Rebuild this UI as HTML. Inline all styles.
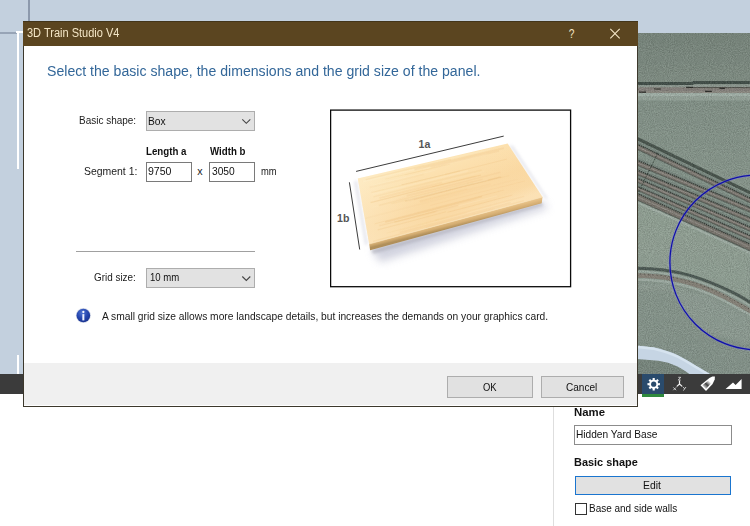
<!DOCTYPE html>
<html lang="en">
<head>
<meta charset="utf-8">
<title>3D Train Studio V4</title>
<style>
html,body{margin:0;padding:0}
body{width:750px;height:526px;position:relative;overflow:hidden;background:#fff;font-family:"Liberation Sans",sans-serif}
.abs{position:absolute}
.t{position:absolute;white-space:pre;line-height:1em;transform-origin:0 0;font-family:"Liberation Sans",sans-serif}
#sky{left:0;top:0;width:750px;height:374px;background:#c3d0de}
#terrain{left:637px;top:33px;width:113px;height:341px}
#toolbar{left:0;top:374px;width:750px;height:20px;background:#3b3b3b}
#tabsel{left:642px;top:374px;width:22px;height:20px;background:#2a4b6c}
#tabgreen{left:642px;top:394px;width:22px;height:3px;background:#2f8a3c}
#panelline{left:553px;top:394px;width:1px;height:132px;background:#dedede}
/* dialog */
#dlg{left:23px;top:21px;width:615px;height:385.7px;background:#fff;box-sizing:border-box;border:1px solid #3c382c;border-top:none}
#titlebar{left:23px;top:21px;width:615px;height:24.5px;background:#5b4520;box-sizing:border-box;border-top:1px solid #43351a}
#footer{left:24px;top:362.7px;width:613px;height:42.1px;background:#f0f0f0}
.combo{background:#e2e2e2;border:1px solid #adadad;box-sizing:border-box}
.inp{background:#fff;border:1px solid #7a7a7a;box-sizing:border-box}
.btn{background:#e1e1e1;border:1px solid #adadad;box-sizing:border-box}
#t_title{left:26.74px;top:26.94px;font-size:12px;font-weight:400;color:#f4e6c6;transform:scaleX(0.9170)}
#t_head{left:46.81px;top:63.46px;font-size:15.4px;font-weight:400;color:#336799;transform:scaleX(0.9161)}
#t_bs{left:78.80px;top:115.44px;font-size:10.7px;font-weight:400;color:#1a1a1a;transform:scaleX(0.9328)}
#t_box{left:148.48px;top:116.44px;font-size:10.7px;font-weight:400;color:#111;transform:scaleX(0.9600)}
#t_la{left:146.01px;top:145.61px;font-size:10.5px;font-weight:700;color:#111;transform:scaleX(0.9249)}
#t_wb{left:209.60px;top:145.61px;font-size:10.5px;font-weight:700;color:#111;transform:scaleX(0.9237)}
#t_seg{left:83.51px;top:166.44px;font-size:10.7px;font-weight:400;color:#1a1a1a;transform:scaleX(0.9765)}
#t_9750{left:147.51px;top:166.44px;font-size:10.7px;font-weight:400;color:#111;transform:scaleX(0.9870)}
#t_x{left:197.25px;top:166.44px;font-size:10.7px;font-weight:400;color:#1a1a1a;letter-spacing:0.000px}
#t_3050{left:211.52px;top:166.44px;font-size:10.7px;font-weight:400;color:#111;transform:scaleX(0.9565)}
#t_mm{left:260.61px;top:166.87px;font-size:10.2px;font-weight:400;color:#1a1a1a;transform:scaleX(0.9206)}
#t_gs{left:94.34px;top:272.24px;font-size:10.7px;font-weight:400;color:#1a1a1a;transform:scaleX(0.9257)}
#t_10{left:149.79px;top:273.27px;font-size:10.2px;font-weight:400;color:#111;transform:scaleX(0.9412)}
#t_info{left:102.00px;top:310.94px;font-size:10.7px;font-weight:400;color:#1a1a1a;transform:scaleX(0.9579)}
#t_ok{left:483.06px;top:381.84px;font-size:10.7px;font-weight:400;color:#111;transform:scaleX(0.8814)}
#t_cancel{left:566.23px;top:381.84px;font-size:10.7px;font-weight:400;color:#111;transform:scaleX(0.9406)}
#t_name{left:574.06px;top:407.17px;font-size:11.5px;font-weight:700;color:#111;transform:scaleX(0.9884)}
#t_hyb{left:576.29px;top:428.84px;font-size:10.7px;font-weight:400;color:#111;transform:scaleX(0.9491)}
#t_bs2{left:574.09px;top:456.97px;font-size:11.5px;font-weight:700;color:#111;transform:scaleX(0.9500)}
#t_edit{left:643.27px;top:479.94px;font-size:10.7px;font-weight:400;color:#111;transform:scaleX(0.9690)}
#t_base{left:589.00px;top:502.94px;font-size:10.7px;font-weight:400;color:#111;transform:scaleX(0.9337)}
</style>
</head>
<body>
<div class="abs" id="sky"></div>
<!-- viewport guide lines on the left -->
<div class="abs" style="left:28px;top:0;width:1.5px;height:21px;background:#8c99ac"></div>
<div class="abs" style="left:0;top:32px;width:17px;height:1.5px;background:#97a4b6"></div>
<div class="abs" style="left:16px;top:31px;width:7px;height:1.5px;background:#fff"></div>
<div class="abs" style="left:16.5px;top:31px;width:2px;height:138px;background:#fff"></div>
<div class="abs" style="left:16.5px;top:355px;width:2px;height:19px;background:#fff"></div>

<!-- 3D terrain -->
<svg class="abs" id="terrain" viewBox="637 33 113 341">
<defs>
<linearGradient id="tg" gradientUnits="userSpaceOnUse" x1="0" y1="33" x2="0" y2="374">
<stop offset="0" stop-color="#77857b"/><stop offset="0.12" stop-color="#7e8c82"/><stop offset="0.2" stop-color="#839288"/><stop offset="0.55" stop-color="#8a998e"/><stop offset="1" stop-color="#84938a"/>
</linearGradient>
<filter id="tn" x="0" y="0" width="100%" height="100%">
<feTurbulence type="fractalNoise" baseFrequency="0.95" numOctaves="2" seed="4" result="n"/>
<feColorMatrix in="n" type="matrix" values="0 0 0 0 0  0 0 0 0 0  0 0 0 0 0  1.4 0 0 0 -0.45"/>
</filter>
<filter id="tn2" x="0" y="0" width="100%" height="100%">
<feTurbulence type="fractalNoise" baseFrequency="0.95" numOctaves="2" seed="11" result="n"/>
<feColorMatrix in="n" type="matrix" values="0 0 0 0 1  0 0 0 0 1  0 0 0 0 1  1.4 0 0 0 -0.5"/>
</filter>
<filter id="b1"><feGaussianBlur stdDeviation="0.7"/></filter>
<filter id="b2"><feGaussianBlur stdDeviation="1.6"/></filter>
<filter id="b05"><feGaussianBlur stdDeviation="0.4"/></filter>
</defs>
<rect x="637" y="33" width="113" height="341" fill="url(#tg)"/>
<polygon points="637,201 750,252 750,300 712,282 666,270 637,268" fill="#93a396" opacity="0.8" filter="url(#b2)"/>
<polygon points="637,282 666,284 712,298 750,318 750,345 700,330 670,290 637,290" fill="#95a39a" opacity="0.5" filter="url(#b2)"/>
<g filter="url(#b05)">
<rect x="637" y="84.5" width="113" height="3" fill="#8d9890"/>
<path d="M637 83.6 L692 83.6 L694 82.4 L750 82.4" stroke="#414d46" stroke-width="3" fill="none"/>
<rect x="637" y="87.3" width="113" height="5.8" fill="#85817b"/>
<rect x="637" y="91" width="113" height="2.2" fill="#8d8c85" opacity="0.8"/>
<path d="M686 87.6 L750 87.6" stroke="#4a4843" stroke-width="0.9" fill="none"/>
<path d="M654 89 L661 89 M639 92.2 L646 92.2 M686 87.4 L693 87.4 M705 91.3 L712 91.3 M719.5 88.3 L725 88.3" stroke="#2b2b27" stroke-width="1.2" fill="none"/>
<rect x="637" y="93.1" width="113" height="3.4" fill="#a3b2a9"/>
<rect x="637" y="96.5" width="113" height="4" fill="#98a79e" opacity="0.8"/>
</g>
<g>
<polygon points="637,138.7 750,192.6 750,252 637,200.5" fill="#84948a"/>
<polygon points="637,144.4 750,198.5 750,202.5 637,149.0" fill="#77736b"/>
<path d="M637 146.5 L750 200.3" stroke="#959089" stroke-width="1.2" stroke-opacity="0.8"/>
<path d="M637 149.2 L750 202.7" stroke="#4a4f49" stroke-width="1.1" stroke-opacity="0.7"/>
<path d="M637 143.9 L750 198.0" stroke="#2a2e2a" stroke-width="1.5" stroke-dasharray="1.5 0.6" stroke-opacity="0.85"/>
<path d="M637 142.2 L750 196.3" stroke="#6f7d75" stroke-width="2" stroke-opacity="0.45"/>
<polygon points="637,160.5 750,208.0 750,212.0 637,165.0" fill="#77736b"/>
<path d="M637 162.5 L750 209.8" stroke="#959089" stroke-width="1.2" stroke-opacity="0.8"/>
<path d="M637 165.2 L750 212.2" stroke="#4a4f49" stroke-width="1.1" stroke-opacity="0.7"/>
<path d="M637 160.0 L750 207.5" stroke="#2a2e2a" stroke-width="1.5" stroke-dasharray="1.5 0.6" stroke-opacity="0.85"/>
<path d="M637 158.3 L750 205.8" stroke="#6f7d75" stroke-width="2" stroke-opacity="0.45"/>
<polygon points="637,170.4 750,218.0 750,222.0 637,174.4" fill="#77736b"/>
<path d="M637 172.2 L750 219.8" stroke="#959089" stroke-width="1.2" stroke-opacity="0.8"/>
<path d="M637 174.6 L750 222.2" stroke="#4a4f49" stroke-width="1.1" stroke-opacity="0.7"/>
<path d="M637 169.9 L750 217.5" stroke="#2a2e2a" stroke-width="1.5" stroke-dasharray="1.5 0.6" stroke-opacity="0.85"/>
<path d="M637 168.2 L750 215.8" stroke="#6f7d75" stroke-width="2" stroke-opacity="0.45"/>
<polygon points="637,178.5 750,227.5 750,231.0 637,182.0" fill="#77736b"/>
<path d="M637 180.1 L750 229.1" stroke="#959089" stroke-width="1.2" stroke-opacity="0.8"/>
<path d="M637 182.2 L750 231.2" stroke="#4a4f49" stroke-width="1.1" stroke-opacity="0.7"/>
<path d="M637 178.0 L750 227.0" stroke="#2a2e2a" stroke-width="1.5" stroke-dasharray="1.5 0.6" stroke-opacity="0.85"/>
<path d="M637 176.3 L750 225.3" stroke="#6f7d75" stroke-width="2" stroke-opacity="0.45"/>
<polygon points="637,186.5 750,236.0 750,239.5 637,190.0" fill="#77736b"/>
<path d="M637 188.1 L750 237.6" stroke="#959089" stroke-width="1.2" stroke-opacity="0.8"/>
<path d="M637 190.2 L750 239.7" stroke="#4a4f49" stroke-width="1.1" stroke-opacity="0.7"/>
<path d="M637 186.0 L750 235.5" stroke="#2a2e2a" stroke-width="1.5" stroke-dasharray="1.5 0.6" stroke-opacity="0.85"/>
<path d="M637 184.3 L750 233.8" stroke="#6f7d75" stroke-width="2" stroke-opacity="0.45"/>
<polygon points="637,193.8 750,244.5 750,250.5 637,199.8" fill="#77736b"/>
<path d="M637 196.5 L750 247.2" stroke="#959089" stroke-width="1.2" stroke-opacity="0.8"/>
<path d="M637 200.0 L750 250.7" stroke="#4a4f49" stroke-width="1.1" stroke-opacity="0.7"/>
<path d="M637 193.3 L750 244.0" stroke="#2a2e2a" stroke-width="1.5" stroke-dasharray="1.5 0.6" stroke-opacity="0.85"/>
<path d="M637 191.6 L750 242.3" stroke="#6f7d75" stroke-width="2" stroke-opacity="0.45"/>
<path d="M636 201.8 L751 253.4" stroke="#a6b4ab" stroke-width="2.2" stroke-opacity="0.8" filter="url(#b1)"/>
<path d="M636 138 L751 193.1" stroke="#47534c" stroke-width="3.2" filter="url(#b1)"/>
<path d="M657.8 152.8 L637.9 193.6" stroke="#2f3b33" stroke-width="0.8" stroke-dasharray="2 1.2"/>
</g>
<path d="M636 268.2 C655 268 672 270.5 689.2 275.1 C706 280 722 287 734.8 293.3 C742 297 746 300 751 303" stroke="#4c5952" stroke-width="3" fill="none" filter="url(#b1)"/>
<path d="M636 271.6 C655 271.6 672 274 689.2 278.6 C706 283.5 722 290.5 734.8 297 C742 300.5 746 303.5 751 306.5" stroke="#9baaa1" stroke-width="2" fill="none" filter="url(#b05)"/>
<path d="M636 275.5 C655 275.4 672 278 689.2 282.7 C706 287.6 722 295 734.8 302.4 C742 306.5 746 308.5 751 311.5" stroke="#868278" stroke-width="4.6" fill="none" filter="url(#b05)"/>
<path d="M636 274 C655 273.9 672 276.4 689.2 281.2 C706 286 722 293.4 734.8 300.6 C742 304.6 746 307 751 310" stroke="#3e3e38" stroke-width="0.9" stroke-dasharray="0.9 3.2" fill="none"/>
<path d="M636 279.6 C655 279.5 672 282 689.2 286.8 C706 291.6 722 299 734.8 306.4 C742 310.5 746 312.5 751 315.5" stroke="#a0aea5" stroke-width="2.4" fill="none" filter="url(#b1)"/>
<path d="M637 358 L658.5 360 C665 361 671 363 677.5 366 C683 369 686 371 690 374.5 L637 374.5 Z" fill="#76847a" opacity="0.8"/>
<rect x="637" y="33" width="113" height="341" filter="url(#tn)" opacity="0.22"/>
<rect x="637" y="33" width="113" height="341" filter="url(#tn2)" opacity="0.16"/>
<path d="M637 345.6 L654.7 347.5 C663 349.5 671 352 677.5 355 C684 358.5 688 360.8 692.8 363.7 L711 374.5 L690 374.5 C686 371.5 683 369.5 677.5 366.5 C671 363.5 665 361.8 658.5 360.8 L637 359 Z" fill="#c6d5e4"/>
<path d="M637 345.6 L654.7 347.5 C663 349.5 671 352 677.5 355 C684 358.5 688 360.8 692.8 363.7 L711 374.5" stroke="#d6e3ef" stroke-width="2.4" fill="none" transform="translate(-0.6,1.3)"/>
<circle cx="757.2" cy="262.5" r="87.3" stroke="#7878e0" stroke-opacity="0.45" stroke-width="2.4" fill="none"/>
<circle cx="757.2" cy="262.5" r="87.3" stroke="#1010a6" stroke-width="1.25" fill="none"/>
</svg>

<div class="abs" id="toolbar"></div>
<div class="abs" id="tabsel"></div>
<div class="abs" id="tabgreen"></div>
<svg class="abs" style="left:637px;top:374px;width:113px;height:20px" viewBox="637 374 113 20">
<path d="M659.91 383.12 L659.91 385.28 L658.17 385.27 L657.62 386.60 L658.85 387.82 L657.32 389.35 L656.10 388.12 L654.77 388.67 L654.78 390.41 L652.62 390.41 L652.63 388.67 L651.30 388.12 L650.08 389.35 L648.55 387.82 L649.78 386.60 L649.23 385.27 L647.49 385.28 L647.49 383.12 L649.23 383.13 L649.78 381.80 L648.55 380.58 L650.08 379.05 L651.30 380.28 L652.63 379.73 L652.62 377.99 L654.78 377.99 L654.77 379.73 L656.10 380.28 L657.32 379.05 L658.85 380.58 L657.62 381.80 L658.17 383.13Z" fill="#fff"/>
<circle cx="653.7" cy="384.2" r="2.6" fill="#2a4b6c"/>
<g stroke="#f4f4f4" stroke-width="1.2" fill="none" stroke-linecap="round"><path d="M679.5 384 L679.5 381 M679.5 384 L677.1 386.1 M679.5 384 L681.9 386.1"/></g>
<g stroke="#ececec" stroke-width="0.8" fill="none"><path d="M678.3 377.3 h2.4 l-2.4 2.8 h2.4 M673.3 387.4 l2.8 2.8 m0 -2.8 l-2.8 2.8 M683.2 387 l1.4 1.8 l1.4 -1.8 m-1.4 1.8 l-1.2 1.8"/></g>
<defs><linearGradient id="pt" gradientUnits="userSpaceOnUse" x1="703" y1="388" x2="710" y2="380.5"><stop offset="0" stop-color="#f4f4f4"/><stop offset="0.18" stop-color="#bbb"/><stop offset="0.5" stop-color="#3e3e3e"/><stop offset="0.8" stop-color="#d0d0d0"/><stop offset="1" stop-color="#fff"/></linearGradient></defs>
<path d="M700.5 385.2 L709.4 377.9 L712.4 376.4 L714.9 376.6 L714.7 379.4 L712.6 384 L706 391 Z" fill="#fff"/>
<path d="M702.4 385.3 L708.4 380.4 L711 383.2 L706 388.9 Z" fill="url(#pt)"/>
<path d="M725.6 389 L733 382.6 L735.6 385 L741.6 379 L741.6 389 Z" fill="#fff"/>
</svg>
<div class="abs" id="panelline"></div>

<!-- right property panel -->
<div class="abs inp" style="left:574px;top:425px;width:158px;height:19.5px;border-color:#8c8c8c"></div>
<div class="abs" style="left:575px;top:475.5px;width:156px;height:19.5px;background:#e1e1e1;box-sizing:border-box;border:1.6px solid #1a75cf"></div>
<div class="abs" style="left:575px;top:502.5px;width:12px;height:12px;background:#fff;box-sizing:border-box;border:1px solid #333"></div>

<!-- dialog -->
<div class="abs" id="dlg"></div>
<div class="abs" id="titlebar"></div>
<div class="abs" id="footer"></div>
<svg class="abs" style="left:560px;top:21px;width:78px;height:25px" viewBox="560 21 78 25">
<path d="M610.3 28.8 L619.7 38.3 M619.7 28.8 L610.3 38.3" stroke="#f4e6c6" stroke-width="1.1" fill="none"/>
<text x="0" y="38.4" transform="translate(571.6 0) scale(0.8 1)" font-family="Liberation Sans, sans-serif" font-size="12.8" fill="#f4e6c6" text-anchor="middle">?</text>
</svg>

<div class="abs combo" style="left:146px;top:111px;width:109px;height:19.5px"></div>
<div class="abs combo" style="left:146px;top:268px;width:109px;height:19.5px"></div>
<svg class="abs" style="left:240px;top:111px;width:14px;height:177px" viewBox="240 111 14 177">
<path d="M242.3 119.3 L246.3 123.3 L250.3 119.3" stroke="#444" stroke-width="1.1" fill="none"/>
<path d="M242.3 276.5 L246.3 280.5 L250.3 276.5" stroke="#444" stroke-width="1.1" fill="none"/>
</svg>
<div class="abs inp" style="left:145.5px;top:162px;width:46px;height:20px"></div>
<div class="abs inp" style="left:209px;top:162px;width:46px;height:20px"></div>
<div class="abs" style="left:76px;top:251px;width:179px;height:1px;background:#a0a0a0"></div>

<!-- preview panel -->
<svg class="abs" style="left:330px;top:109px;width:242px;height:179px" viewBox="330 109 242 179">
<defs>
<linearGradient id="wg" gradientUnits="userSpaceOnUse" x1="430" y1="158" x2="455" y2="224">
<stop offset="0" stop-color="#fde6b8"/><stop offset="0.25" stop-color="#fce0ae"/><stop offset="0.6" stop-color="#fad9a3"/><stop offset="0.85" stop-color="#fadaa6"/><stop offset="1" stop-color="#fce2b6"/>
</linearGradient>
<linearGradient id="wl" gradientUnits="userSpaceOnUse" x1="360" y1="210" x2="540" y2="170">
<stop offset="0" stop-color="#fff3d8" stop-opacity="0.35"/><stop offset="0.35" stop-color="#fff3d8" stop-opacity="0"/><stop offset="1" stop-color="#f0c07a" stop-opacity="0.03"/>
</linearGradient>
<linearGradient id="wf" gradientUnits="userSpaceOnUse" x1="455" y1="220" x2="456.6" y2="226.5">
<stop offset="0" stop-color="#e6c086"/><stop offset="0.55" stop-color="#d4ad72"/><stop offset="1" stop-color="#b08f5a"/>
</linearGradient>
<filter id="wsh" x="-20%" y="-50%" width="140%" height="220%"><feGaussianBlur stdDeviation="4"/></filter>
<filter id="wsh2" x="-20%" y="-50%" width="140%" height="220%"><feGaussianBlur stdDeviation="1.5"/></filter>
<filter id="gb"><feGaussianBlur stdDeviation="0.7"/></filter>
<clipPath id="wclip"><polygon points="357.8,178.6 507.7,143.5 542.5,197.1 369.2,244.0"/></clipPath>
</defs>
<rect x="330.6" y="110.1" width="240" height="176.6" fill="#fff" stroke="#0a0a0a" stroke-width="1.3"/>
<polygon points="372,249 543,202 548,208 380,262" fill="#c4c6d6" opacity="0.8" filter="url(#wsh)"/>
<polygon points="371,249.5 542,202.5 543,205.5 373,254" fill="#9a9aa8" opacity="0.5" filter="url(#wsh2)"/>
<polygon points="509,145 545,198 548,199 513,146" fill="#c9cad8" opacity="0.5" filter="url(#wsh2)"/>
<polygon points="357,180 368,244 365,245 354,182" fill="#c9cad8" opacity="0.45" filter="url(#wsh2)"/>
<polygon points="357.8,178.6 507.7,143.5 542.5,197.1 369.2,244.0" fill="url(#wg)"/>
<polygon points="357.8,178.6 507.7,143.5 542.5,197.1 369.2,244.0" fill="url(#wl)"/>
<g clip-path="url(#wclip)" filter="url(#gb)" fill="none">
<path d="M373.4 196.8 Q427.6 182.7 481.9 170.0" stroke="#dca65e" stroke-opacity="0.09" stroke-width="1.3"/>
<path d="M386.5 233.2 Q412.7 226.0 438.8 219.2" stroke="#e8b772" stroke-opacity="0.09" stroke-width="1.1"/>
<path d="M377.7 229.9 Q411.9 221.1 446.0 211.8" stroke="#e2ae66" stroke-opacity="0.16" stroke-width="1.1"/>
<path d="M373.0 241.4 Q448.4 220.7 523.9 200.6" stroke="#e8b772" stroke-opacity="0.16" stroke-width="1.3"/>
<path d="M419.8 201.0 Q443.6 195.0 467.4 188.8" stroke="#e8b772" stroke-opacity="0.13" stroke-width="1.3"/>
<path d="M363.0 181.6 Q393.2 174.8 423.3 167.4" stroke="#fff3da" stroke-opacity="0.19" stroke-width="1.2"/>
<path d="M399.3 230.7 Q432.9 221.2 466.5 212.7" stroke="#e8b772" stroke-opacity="0.09" stroke-width="1.0"/>
<path d="M391.2 203.9 Q432.3 193.7 473.5 183.1" stroke="#e2ae66" stroke-opacity="0.10" stroke-width="1.1"/>
<path d="M379.2 224.8 Q427.7 211.3 476.3 199.3" stroke="#ecbf80" stroke-opacity="0.09" stroke-width="1.3"/>
<path d="M435.7 212.0 Q466.5 203.7 497.3 195.8" stroke="#fff3da" stroke-opacity="0.16" stroke-width="1.1"/>
<path d="M447.5 212.3 Q479.8 203.9 512.2 195.1" stroke="#e2ae66" stroke-opacity="0.18" stroke-width="1.0"/>
<path d="M420.1 202.1 Q455.4 193.4 490.7 184.0" stroke="#ecbf80" stroke-opacity="0.13" stroke-width="1.7"/>
<path d="M410.2 189.8 Q447.3 180.2 484.5 171.4" stroke="#fff0d0" stroke-opacity="0.10" stroke-width="0.9"/>
<path d="M431.6 186.9 Q453.5 181.3 475.3 175.9" stroke="#dca65e" stroke-opacity="0.12" stroke-width="0.8"/>
<path d="M406.7 195.7 Q453.5 184.7 500.4 172.2" stroke="#ecbf80" stroke-opacity="0.20" stroke-width="1.7"/>
<path d="M373.0 185.2 Q404.0 177.4 435.0 170.3" stroke="#fff3da" stroke-opacity="0.20" stroke-width="0.8"/>
<path d="M372.4 194.2 Q420.3 182.7 468.2 170.7" stroke="#fff0d0" stroke-opacity="0.21" stroke-width="1.4"/>
<path d="M413.7 199.6 Q458.1 187.6 502.5 177.0" stroke="#ecbf80" stroke-opacity="0.19" stroke-width="1.1"/>
<path d="M370.6 202.6 Q425.8 188.1 480.9 175.1" stroke="#e2ae66" stroke-opacity="0.22" stroke-width="1.1"/>
<path d="M404.9 174.9 Q427.4 169.6 450.0 164.1" stroke="#dca65e" stroke-opacity="0.09" stroke-width="1.0"/>
<path d="M423.9 164.8 Q457.2 156.4 490.4 149.1" stroke="#fff0d0" stroke-opacity="0.21" stroke-width="1.3"/>
<path d="M372.5 207.3 Q419.8 196.1 467.1 183.3" stroke="#fff3da" stroke-opacity="0.15" stroke-width="0.7"/>
<path d="M385.1 179.1 Q415.8 172.3 446.5 164.4" stroke="#e8b772" stroke-opacity="0.15" stroke-width="0.8"/>
<path d="M399.8 232.5 Q455.1 218.3 510.5 202.7" stroke="#dca65e" stroke-opacity="0.12" stroke-width="1.4"/>
<path d="M423.1 169.3 Q455.0 162.3 486.9 154.1" stroke="#fff0d0" stroke-opacity="0.19" stroke-width="1.2"/>
<path d="M394.4 222.2 Q426.4 214.3 458.4 205.4" stroke="#e8b772" stroke-opacity="0.19" stroke-width="1.6"/>
<path d="M385.2 222.0 Q433.6 209.1 482.1 196.6" stroke="#e2ae66" stroke-opacity="0.22" stroke-width="1.5"/>
<path d="M378.8 205.5 Q430.7 192.2 482.6 179.3" stroke="#ecbf80" stroke-opacity="0.22" stroke-width="1.7"/>
<path d="M379.4 198.1 Q410.7 189.8 442.0 182.5" stroke="#e8b772" stroke-opacity="0.15" stroke-width="1.8"/>
<path d="M364.9 218.5 Q441.3 198.5 517.8 179.1" stroke="#ecbf80" stroke-opacity="0.09" stroke-width="1.4"/>
<path d="M435.1 220.2 Q479.6 208.2 524.0 196.4" stroke="#e8b772" stroke-opacity="0.14" stroke-width="1.4"/>
<path d="M430.7 167.2 Q464.8 159.0 499.0 150.9" stroke="#ecbf80" stroke-opacity="0.21" stroke-width="1.5"/>
<path d="M369.5 187.4 Q396.7 181.4 423.9 174.2" stroke="#ecbf80" stroke-opacity="0.10" stroke-width="1.6"/>
<path d="M425.8 227.4 Q460.1 218.2 494.5 208.8" stroke="#e8b772" stroke-opacity="0.08" stroke-width="1.6"/>
<path d="M374.7 223.9 Q439.2 206.4 503.8 190.1" stroke="#e8b772" stroke-opacity="0.20" stroke-width="0.9"/>
<path d="M383.5 189.5 Q414.3 182.1 445.1 174.4" stroke="#fff0d0" stroke-opacity="0.16" stroke-width="1.6"/>
<path d="M414.5 169.3 Q459.2 159.0 503.9 148.2" stroke="#dca65e" stroke-opacity="0.14" stroke-width="1.7"/>
<path d="M406.5 200.5 Q447.2 189.4 487.9 179.9" stroke="#fff3da" stroke-opacity="0.19" stroke-width="1.3"/>
<path d="M379.2 226.0 Q408.3 218.6 437.3 210.7" stroke="#e2ae66" stroke-opacity="0.16" stroke-width="1.0"/>
<path d="M408.7 201.1 Q459.0 187.6 509.2 175.5" stroke="#dca65e" stroke-opacity="0.09" stroke-width="0.8"/>
<path d="M365.7 179.6 Q408.4 168.8 451.2 159.4" stroke="#e2ae66" stroke-opacity="0.14" stroke-width="1.3"/>
<path d="M405.0 201.1 Q452.9 188.9 500.7 176.8" stroke="#dca65e" stroke-opacity="0.19" stroke-width="1.2"/>
<path d="M401.4 184.8 Q454.1 172.6 506.9 159.1" stroke="#dca65e" stroke-opacity="0.20" stroke-width="0.8"/>
<path d="M396.3 199.5 Q433.4 189.8 470.5 180.8" stroke="#ecbf80" stroke-opacity="0.11" stroke-width="0.7"/>
<path d="M430.3 205.5 Q477.6 192.7 524.9 181.0" stroke="#ecbf80" stroke-opacity="0.17" stroke-width="1.0"/>
<path d="M371.4 192.5 Q415.7 182.1 460.0 170.9" stroke="#e2ae66" stroke-opacity="0.14" stroke-width="1.2"/>
</g>
<polygon points="369.2,244.0 542.5,197.1 541.7,203.2 370.1,250.2" fill="url(#wf)"/>
<path d="M369.2 244.0 L542.5 197.1" stroke="#f9e2b8" stroke-width="0.8" stroke-opacity="0.7"/>
<path d="M356.1 171.4 L503.7 136.1" stroke="#3c3c3c" stroke-width="1"/>
<path d="M349.4 182.3 L359.7 249.5" stroke="#3c3c3c" stroke-width="1"/>
<text x="418.6" y="147.7" font-family="Liberation Sans, sans-serif" font-weight="700" font-size="10.6" fill="#555">1a</text>
<text x="337.0" y="221.8" font-family="Liberation Sans, sans-serif" font-weight="700" font-size="10.6" fill="#555">1b</text>
</svg>

<!-- info icon -->
<svg class="abs" style="left:74px;top:306px;width:19px;height:19px" viewBox="74 306 19 19">
<defs><radialGradient id="ig" cx="0.42" cy="0.3" r="0.75"><stop offset="0" stop-color="#4f74d2"/><stop offset="0.55" stop-color="#2546ae"/><stop offset="1" stop-color="#172f8c"/></radialGradient></defs>
<circle cx="83.35" cy="315.5" r="7.5" fill="#d3d8e6"/>
<circle cx="83.35" cy="315.5" r="6.8" fill="url(#ig)"/>
<circle cx="83.35" cy="312" r="1.15" fill="#f4f7ff"/>
<rect x="82.35" y="314.1" width="2" height="6.3" fill="#eef2ff"/>
</svg>

<div class="abs btn" style="left:447px;top:376px;width:86px;height:21.5px"></div>
<div class="abs btn" style="left:541px;top:376px;width:83px;height:21.5px"></div>

<span class="t" id="t_title">3D Train Studio V4</span>
<span class="t" id="t_head">Select the basic shape, the dimensions and the grid size of the panel.</span>
<span class="t" id="t_bs">Basic shape:</span>
<span class="t" id="t_box">Box</span>
<span class="t" id="t_la">Length a</span>
<span class="t" id="t_wb">Width b</span>
<span class="t" id="t_seg">Segment 1:</span>
<span class="t" id="t_9750">9750</span>
<span class="t" id="t_x">x</span>
<span class="t" id="t_3050">3050</span>
<span class="t" id="t_mm">mm</span>
<span class="t" id="t_gs">Grid size:</span>
<span class="t" id="t_10">10 mm</span>
<span class="t" id="t_info">A small grid size allows more landscape details, but increases the demands on your graphics card.</span>
<span class="t" id="t_ok">OK</span>
<span class="t" id="t_cancel">Cancel</span>
<span class="t" id="t_name">Name</span>
<span class="t" id="t_hyb">Hidden Yard Base</span>
<span class="t" id="t_bs2">Basic shape</span>
<span class="t" id="t_edit">Edit</span>
<span class="t" id="t_base">Base and side walls</span>
</body>
</html>
